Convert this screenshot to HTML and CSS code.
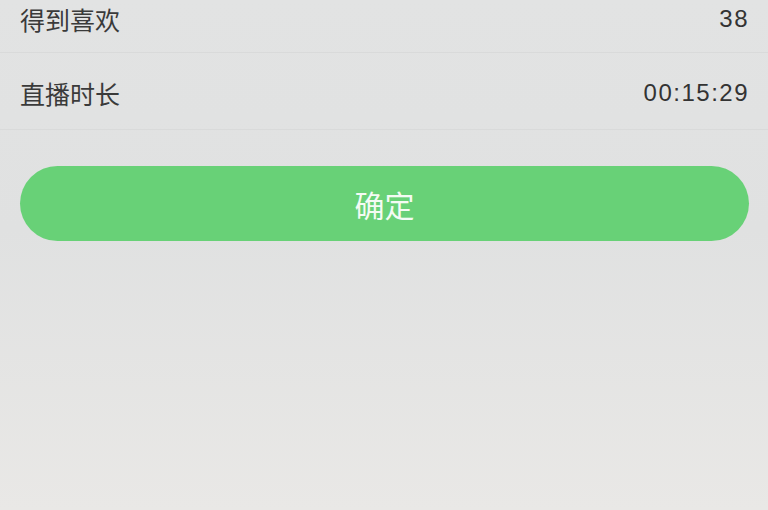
FILE: index.html
```html
<!DOCTYPE html>
<html lang="zh">
<head>
<meta charset="utf-8">
<link rel="stylesheet" href="styles.css">
</head>
<body>
<div class="page">
  <div class="list">
    <div class="row row-partial"><span class="label">得到喜欢</span><span class="value">38</span></div>
    <div class="row"><span class="label">直播时长</span><span class="value">00:15:29</span></div>
  </div>
  <button class="confirm">确定</button>
</div>
</body>
</html>
```
FILE: styles.css
```css
html, body {
  margin: 0;
  padding: 0;
  height: 100%;
}
body {
  background: linear-gradient(180deg, #e2e3e3 0%, #e0e1e1 45%, #e9e8e6 100%);
  font-family: "Liberation Sans", "Noto Sans CJK SC", sans-serif;
  overflow: hidden;
}
.page {
  display: flex;
  flex-direction: column;
}
.list {
  display: flex;
  flex-direction: column;
}
.row {
  height: 77px;
  box-sizing: border-box;
  padding: 4px 20px 0 20px;
  display: flex;
  align-items: center;
  justify-content: space-between;
  border-bottom: 1px solid #d9dada;
}
.row-partial {
  height: 53px;
  padding: 2px 20px 17px 20px;
}
.label {
  font-size: 25px;
  line-height: 28px;
  color: #3a3a3a;
  font-family: "Noto Sans CJK SC", sans-serif;
}
.value {
  font-size: 24px;
  line-height: 28px;
  letter-spacing: 1.5px;
  margin-right: -1px;
  color: #333333;
}
.confirm {
  margin: 36px 19px 0 20px;
  height: 75px;
  border: none;
  border-radius: 38px;
  background: #68d177;
  color: #f4fbf4;
  font-size: 30px;
  font-family: "Noto Sans CJK SC", sans-serif;
  padding: 0;
}
```
